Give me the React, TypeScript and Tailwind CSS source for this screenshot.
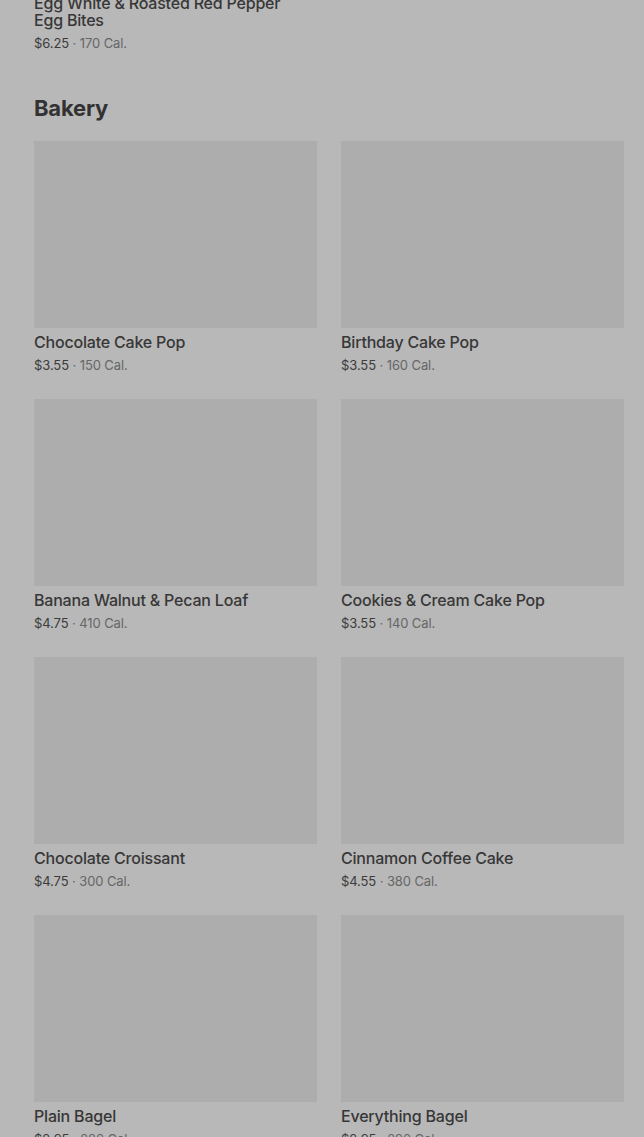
const bakery = [
  { name: "Chocolate Cake Pop", price: "$3.55", cal: "150 Cal." },
  { name: "Birthday Cake Pop", price: "$3.55", cal: "160 Cal." },
  { name: "Banana Walnut & Pecan Loaf", price: "$4.75", cal: "410 Cal." },
  { name: "Cookies & Cream Cake Pop", price: "$3.55", cal: "140 Cal." },
  { name: "Chocolate Croissant", price: "$4.75", cal: "300 Cal." },
  { name: "Cinnamon Coffee Cake", price: "$4.55", cal: "380 Cal." },
  { name: "Plain Bagel", price: "$2.95", cal: "280 Cal." },
  { name: "Everything Bagel", price: "$2.95", cal: "290 Cal." },
];

function PriceLine({ price, cal }: { price: string; cal: string }) {
  return (
    <p className="mt-[6px] text-[13px] leading-[16px] tracking-[-0.1px]">
      <span className="text-[#3c3c3c]">{price}</span>
      <span className="text-[#666]"> · {cal}</span>
    </p>
  );
}

export default function App() {
  return (
    <div
      className="min-h-screen overflow-hidden bg-[#b8b8b8] pl-[34px] pr-[20px]"
      style={{ fontFamily: "Inter, 'Noto Sans', sans-serif" }}
    >
      {/* tail of previous section */}
      <div className="-mt-[5px] w-[262px]">
        <h3 className="text-[16px] font-medium leading-[17px] tracking-[-0.2px] text-[#373737]">
          Egg White &amp; Roasted Red Pepper Egg Bites
        </h3>
        <PriceLine price="$6.25" cal="170 Cal." />
      </div>

      <h2 className="mt-[43px] mb-[19px] text-[22px] font-bold leading-[28px] tracking-[-0.2px] text-[#323232]">
        Bakery
      </h2>

      <div className="grid grid-cols-2 gap-x-[24px] gap-y-[26px]">
        {bakery.map((item) => (
          <div key={item.name}>
            <div className="h-[187px] bg-[#adadad]" />
            <h3 className="pt-[6px] text-[16px] font-medium leading-[17px] tracking-[-0.2px] text-[#373737]">
              {item.name}
            </h3>
            <PriceLine price={item.price} cal={item.cal} />
          </div>
        ))}
      </div>
    </div>
  );
}
